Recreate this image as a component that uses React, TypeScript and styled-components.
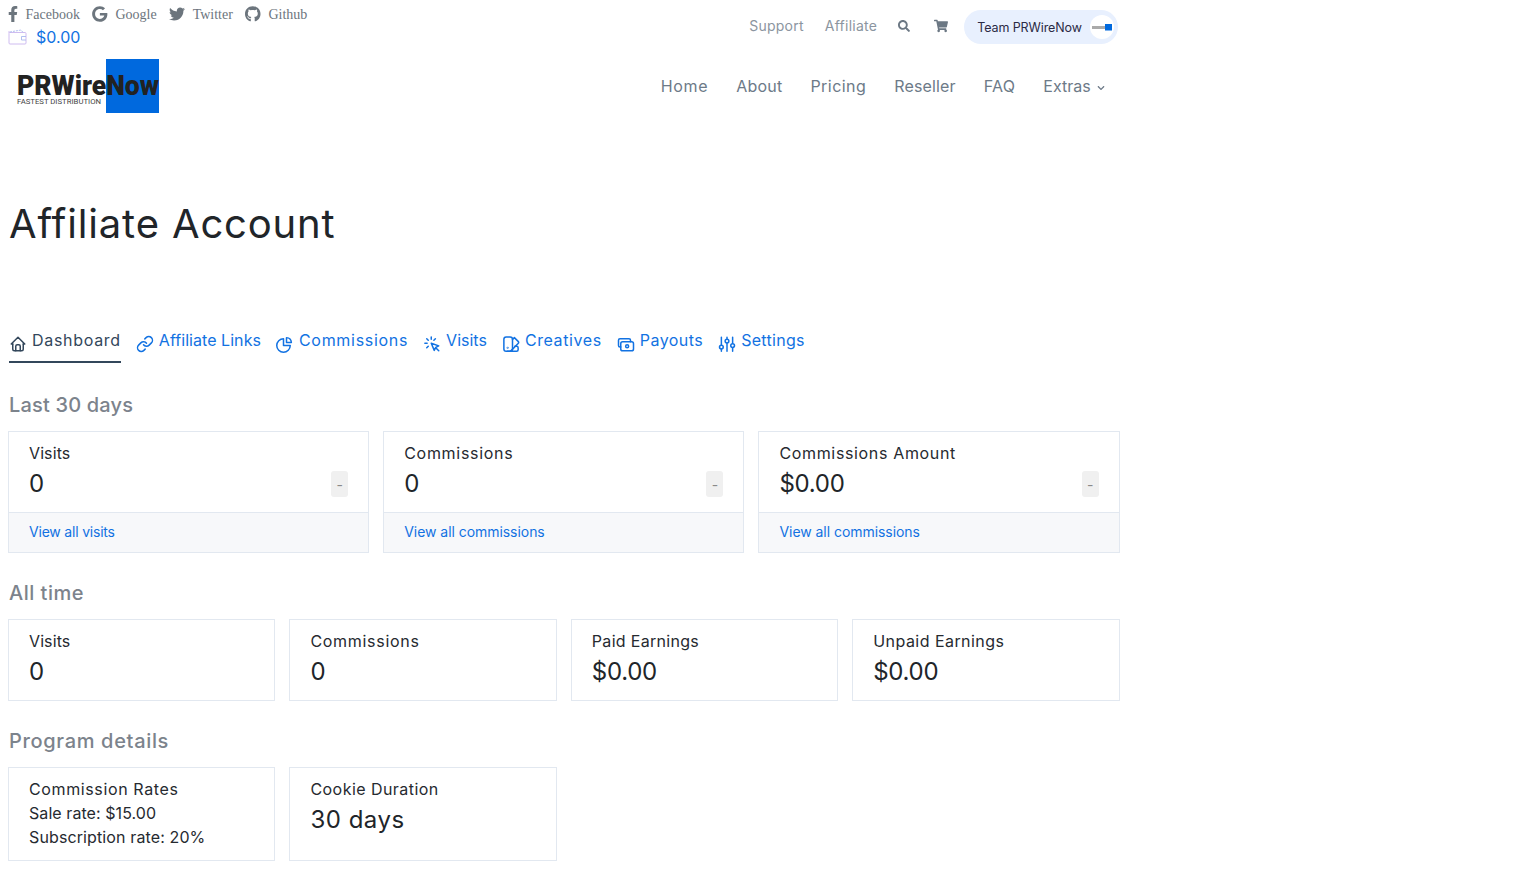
import React from "react";
import styled, { createGlobalStyle } from "styled-components";
import { FaFacebookF, FaGoogle, FaTwitter, FaGithub, FaSearch, FaShoppingCart, FaChevronDown } from "react-icons/fa";
import { TbHome } from "react-icons/tb";

const Global = createGlobalStyle`
  html, body { margin: 0; padding: 0; background: #fff; }
  body { font-family: Inter, "Open Sans", sans-serif; color: #212529; }
  a { text-decoration: none; color: inherit; }
`;

const Page = styled.div`
  width: 1111.7px;
  margin-left: 8px;
  height: 889px;
  overflow: hidden;
`;
const TopBar = styled.header`
  display: flex;
  justify-content: space-between;
  height: 59px;
`;
const Left = styled.div`
  display: flex;
  flex-direction: column;
`;
const Socials = styled.div`
  display: flex;
  gap: 12.5px;
  height: 28px;
  padding-top: 1px;
  align-items: center;
`;
const Social = styled.a<{ $w: number }>`
  display: flex;
  align-items: center;
  gap: 7.5px;
  font: 14px "Liberation Serif", serif;
  color: #6c757d;
  svg { width: ${(p) => p.$w}px; height: 16px; margin-top: -2px; flex: none; }
`;
const Balance = styled.div`
  display: flex;
  align-items: center;
  gap: 8px;
  font-size: 16px;
  color: #1272e2;
  height: 16px;
`;
const TopNav = styled.nav`
  display: flex;
  align-items: center;
  height: 34px;
  margin-top: 10px;
  margin-right: 1.5px;
  font-size: 14px;
  letter-spacing: 0.25px;
  color: #8b95a0;
`;
const TopLink = styled.a`
  margin-right: 21px;
  margin-top: -3px;
`;
const TopIcon = styled.a<{ $size: number }>`
  display: flex;
  margin-right: 24px;
  margin-top: -3px;
  color: #6c7884;
  font-size: ${(p) => p.$size}px;
`;
const Pill = styled.div`
  display: flex;
  align-items: center;
  justify-content: space-between;
  width: 154px;
  height: 34px;
  box-sizing: border-box;
  padding: 0 4px 0 13px;
  margin-left: -8px;
  background: #e8f0fe;
  border-radius: 17px;
  font-size: 12.5px;
  letter-spacing: -0.1px;
  color: #2b2b45;
`;
const Avatar = styled.div`
  width: 24px;
  height: 24px;
  border-radius: 50%;
  background: #fff;
  display: flex;
  align-items: center;
  justify-content: center;
`;
const MainNav = styled.div`
  display: flex;
  justify-content: space-between;
  align-items: center;
  height: 54px;
`;
const Menu = styled.nav`
  display: flex;
  align-items: center;
  gap: 28px;
  margin-right: 15px;
  font-size: 16px;
  color: #6d7a88;
`;
const MenuLink = styled.a<{ $ls: number }>`
  letter-spacing: ${(p) => p.$ls}px;
`;
const MenuDrop = styled.a`
  display: flex;
  align-items: center;
  gap: 6px;
  svg { font-size: 8px; margin-top: 3px; }
`;
const Title = styled.h1`
  margin: 83px 0 0 1px;
  font-size: 40px;
  font-weight: 400;
  line-height: 56px;
  letter-spacing: 0.85px;
  color: #212529;
`;
const Tabs = styled.nav`
  display: flex;
  gap: 15px;
  margin: 76px 0 0 1px;
  height: 35px;
`;
const Tab = styled.a<{ $active?: boolean; $ls: number }>`
  display: flex;
  align-items: flex-start;
  gap: 5px;
  height: 33px;
  font-size: 16px;
  line-height: 24px;
  letter-spacing: ${(p) => p.$ls}px;
  color: ${(p) => (p.$active ? "#33475b" : "#1272e2")};
  border-bottom: 2px solid ${(p) => (p.$active ? "#33475b" : "transparent")};
  svg { margin-top: 7px; flex: none; width: 18px; height: 18px; }
`;
const Section = styled.h2<{ $top: number; $ls: number }>`
  margin: ${(p) => p.$top}px 0 0 1px;
  font-size: 20px;
  line-height: 30px;
  font-weight: 500;
  letter-spacing: ${(p) => p.$ls}px;
  color: #7c838c;
`;
const Grid = styled.div<{ $cols: number }>`
  display: grid;
  grid-template-columns: repeat(${(p) => p.$cols}, 1fr);
  gap: 14px;
  margin-top: 11px;
`;
const Card = styled.div`
  border: 1px solid #e2e8f0;
  background: #fff;
  box-sizing: border-box;
`;
const Body = styled.div<{ $h: number }>`
  padding: 9px 20px 0;
  height: ${(p) => p.$h}px;
  box-sizing: border-box;
`;
const Label = styled.div<{ $ls: number }>`
  font-size: 16px;
  line-height: 24px;
  letter-spacing: ${(p) => p.$ls}px;
  color: #262a30;
`;
const Value = styled.div<{ $ls: number }>`
  margin-top: 1px;
  font-size: 24px;
  line-height: 36px;
  letter-spacing: ${(p) => p.$ls}px;
  color: #212529;
`;
const Row = styled.div`
  display: flex;
  align-items: center;
  justify-content: space-between;
`;
const Badge = styled.span`
  display: flex;
  align-items: center;
  justify-content: center;
  width: 17px;
  height: 26px;
  margin-top: 1px;
  border-radius: 3px;
  background: #f0f0f0;
  color: #8a8a8a;
  font-size: 14px;
`;
const Footer = styled.a<{ $ls: number }>`
  display: flex;
  align-items: center;
  height: 37px;
  padding: 0 20px 2px;
  background: #f7f8fa;
  border-top: 1px solid #e2e8f0;
  font-size: 14px;
  letter-spacing: ${(p) => p.$ls}px;
  color: #1272e2;
`;

const Line = ({ children }: { children: React.ReactNode }) => (
  <svg viewBox="0 0 24 24" fill="none" stroke="currentColor" strokeWidth="2" strokeLinecap="round" strokeLinejoin="round">
    {children}
  </svg>
);
const LinkIcon = () => (
  <Line>
    <path d="M10 13a5 5 0 0 0 7.54.54l3-3a5 5 0 0 0-7.07-7.07l-1.72 1.71" />
    <path d="M14 11a5 5 0 0 0-7.54-.54l-3 3a5 5 0 0 0 7.07 7.07l1.71-1.71" />
  </Line>
);
const CommIcon = () => (
  <Line>
    <path d="M10 5a9 9 0 1 0 9 9h-9z" />
    <path d="M14 3.5a7 7 0 0 1 6.5 6.5H14z" />
  </Line>
);
const ClickIcon = () => (
  <Line>
    <path d="M11 11l10 3.5-4 2-2 4z" />
    <path d="M17 17l4 4" />
    <path d="M2.5 11h3M11 2.5v3M5 5l2 2M16.5 5l-2 2M5 17l2-2" />
  </Line>
);
const CreativeIcon = () => (
  <Line>
    <rect x="2.5" y="2.5" width="11.5" height="19" rx="3" />
    <path d="M14 6l2.5-2.5 5 5a2 2 0 0 1 0 2.8L11.5 21.5" />
    <path d="M17 15h2.5a2 2 0 0 1 2 2v2.5a2 2 0 0 1-2 2H7" />
    <circle cx="7.5" cy="17" r="0.4" />
  </Line>
);
const PayIcon = () => (
  <Line>
    <rect x="5" y="9" width="17" height="12" rx="2.5" />
    <circle cx="13.5" cy="15" r="2" />
    <path d="M18 9V7a2 2 0 0 0-2-2H4a2 2 0 0 0-2 2v7a2 2 0 0 0 2 2h1" />
  </Line>
);
const SlidersIcon = () => (
  <Line>
    <path d="M4.5 3v10M4.5 19v2.5M12 3v2M12 11v10.5M19.5 3v8M19.5 17v4.5" />
    <circle cx="4.5" cy="16" r="2.5" />
    <circle cx="12" cy="8" r="2.5" />
    <circle cx="19.5" cy="14" r="2.5" />
  </Line>
);
const WalletIcon = () => (
  <svg width="20" height="16" viewBox="0 0 20 16" fill="none" stroke="#a9b8ee" strokeWidth="0.9">
    <path d="M1 4.5V14a1 1 0 0 0 1 1h15a1 1 0 0 0 1-1V4.5a1 1 0 0 0-1-1H2a1 1 0 0 1-1-1z" stroke="#c9b4ee" />
    <path d="M2 3l11-2 2 2.4" strokeDasharray="2 1" />
    <path d="M18 7.5h-4.5v3.5H18" />
  </svg>
);
const LogoMark = () => (
  <svg width="152" height="54" viewBox="0 0 152 54" role="img">
    <rect x="98" y="0" width="53" height="54" fill="#0069de" />
    <text transform="translate(9 36) scale(1 1.08)" fontFamily="Roboto, sans-serif" fontWeight="900" fontSize="25" textLength="142" lengthAdjust="spacingAndGlyphs" fill="#222">PRWireNow</text>
    <text x="9" y="45" fontFamily="Roboto, sans-serif" fontSize="8" textLength="84" lengthAdjust="spacingAndGlyphs" fill="#444">FASTEST DISTRIBUTION</text>
  </svg>
);
const MiniLogo = () => (
  <svg width="20" height="7" viewBox="0 0 20 7">
    <rect x="0" y="2" width="13" height="3" fill="#aaa" />
    <rect x="13" y="0" width="7" height="6.5" fill="#0069de" />
  </svg>
);

const tabs: [React.ReactNode, string, number][] = [
  [<TbHome />, "Dashboard", 0.7],
  [<LinkIcon />, "Affiliate Links", 0.05],
  [<CommIcon />, "Commissions", 0.7],
  [<ClickIcon />, "Visits", 0],
  [<CreativeIcon />, "Creatives", 0.6],
  [<PayIcon />, "Payouts", 0.45],
  [<SlidersIcon />, "Settings", 0.3],
];

const last30: [string, number, string, number, string, number][] = [
  ["Visits", 0.1, "0", 0, "View all visits", -0.2],
  ["Commissions", 0.7, "0", 0, "View all commissions", -0.05],
  ["Commissions Amount", 0.65, "$0.00", -0.3, "View all commissions", -0.05],
];

const allTime: [string, number, string, number][] = [
  ["Visits", 0.1, "0", 0],
  ["Commissions", 0.7, "0", 0],
  ["Paid Earnings", 0.3, "$0.00", -0.3],
  ["Unpaid Earnings", 0.45, "$0.00", -0.3],
];

export default function App() {
  return (
    <Page>
      <Global />
      <TopBar>
        <Left>
          <Socials>
            <Social href="#" $w={10}><FaFacebookF />Facebook</Social>
            <Social href="#" $w={15.5}><FaGoogle />Google</Social>
            <Social href="#" $w={16}><FaTwitter />Twitter</Social>
            <Social href="#" $w={15.5}><FaGithub />Github</Social>
          </Socials>
          <Balance><WalletIcon />$0.00</Balance>
        </Left>
        <TopNav>
          <TopLink href="#">Support</TopLink>
          <TopLink href="#">Affiliate</TopLink>
          <TopIcon href="#" $size={12}><FaSearch /></TopIcon>
          <TopIcon href="#" $size={14}><FaShoppingCart /></TopIcon>
          <Pill>Team PRWireNow<Avatar><MiniLogo /></Avatar></Pill>
        </TopNav>
      </TopBar>
      <MainNav>
        <LogoMark />
        <Menu>
          <MenuLink href="#" $ls={0.7}>Home</MenuLink>
          <MenuLink href="#" $ls={0.2}>About</MenuLink>
          <MenuLink href="#" $ls={0.45}>Pricing</MenuLink>
          <MenuLink href="#" $ls={0.15}>Reseller</MenuLink>
          <MenuLink href="#" $ls={0.3}>FAQ</MenuLink>
          <MenuDrop href="#">Extras<FaChevronDown /></MenuDrop>
        </Menu>
      </MainNav>
      <Title>Affiliate Account</Title>
      <Tabs>
        {tabs.map(([icon, label, ls], i) => (
          <Tab href="#" key={label} $active={i === 0} $ls={ls}>{icon}{label}</Tab>
        ))}
      </Tabs>
      <Section $top={27} $ls={0.17}>Last 30 days</Section>
      <Grid $cols={3}>
        {last30.map(([l, ll, v, vl, f, fl]) => (
          <Card key={l}>
            <Body $h={80}>
              <Label $ls={ll}>{l}</Label>
              <Row><Value $ls={vl}>{v}</Value><Badge>-</Badge></Row>
            </Body>
            <Footer href="#" $ls={fl}>{f}</Footer>
          </Card>
        ))}
      </Grid>
      <Section $top={25} $ls={0.5}>All time</Section>
      <Grid $cols={4}>
        {allTime.map(([l, ll, v, vl]) => (
          <Card key={l}>
            <Body $h={80}><Label $ls={ll}>{l}</Label><Value $ls={vl}>{v}</Value></Body>
          </Card>
        ))}
      </Grid>
      <Section $top={25} $ls={0.67}>Program details</Section>
      <Grid $cols={4}>
        <Card>
          <Body $h={92}>
            <Label $ls={0.62}>Commission Rates</Label>
            <Label $ls={0.07}>Sale rate: $15.00</Label>
            <Label $ls={0.12}>Subscription rate: 20%</Label>
          </Body>
        </Card>
        <Card>
          <Body $h={92}><Label $ls={0.45}>Cookie Duration</Label><Value $ls={0.5}>30 days</Value></Body>
        </Card>
      </Grid>
    </Page>
  );
}
